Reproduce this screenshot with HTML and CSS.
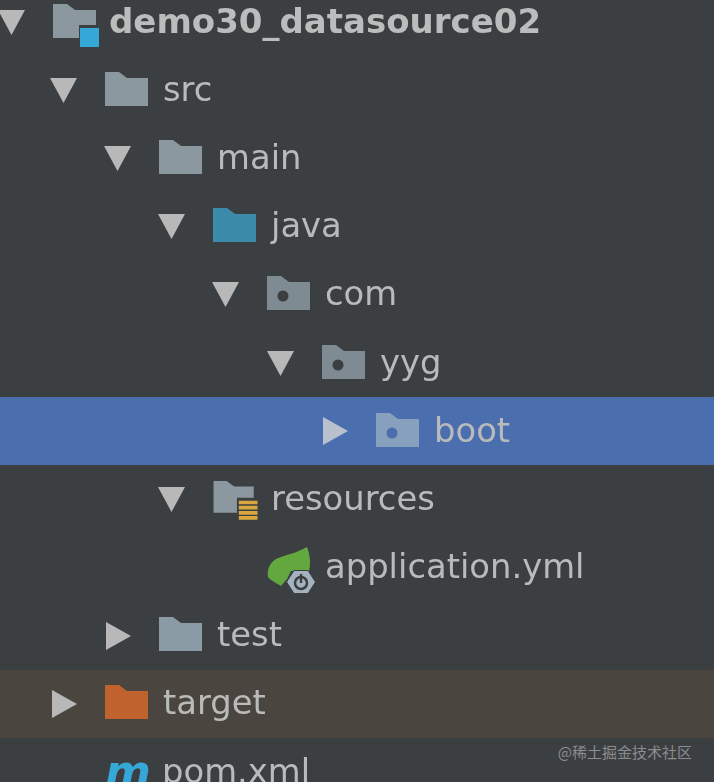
FILE: index.html
```html
<!DOCTYPE html>
<html lang="zh-CN">
<head>
  <meta charset="UTF-8">
  <meta name="viewport" content="width=device-width, initial-scale=1.0">
  <title>demo30_datasource02</title>
  <link rel="stylesheet" href="styles.css">
</head>
<body>

<div class="tree">
  <div class="row lv0">
    <svg class="arrow" viewBox="0 0 27 25"><path d="M0 0H27L13.5 25Z"/></svg>
    <svg class="icon" viewBox="0 0 46 43"><path class="folder" d="M0 0H14L22 6H43V21H26V34H0Z"/><rect class="module-mark" x="27" y="24" width="19" height="19"/></svg>
    <span class="name bold">demo30_datasource02</span>
  </div>
  <div class="row lv1">
    <svg class="arrow" viewBox="0 0 27 25"><path d="M0 0H27L13.5 25Z"/></svg>
    <svg class="icon" viewBox="0 0 46 43"><path class="folder" d="M0 0H14L22 6H43V34H0Z"/></svg>
    <span class="name">src</span>
  </div>
  <div class="row lv2">
    <svg class="arrow" viewBox="0 0 27 25"><path d="M0 0H27L13.5 25Z"/></svg>
    <svg class="icon" viewBox="0 0 46 43"><path class="folder" d="M0 0H14L22 6H43V34H0Z"/></svg>
    <span class="name">main</span>
  </div>
  <div class="row lv3">
    <svg class="arrow" viewBox="0 0 27 25"><path d="M0 0H27L13.5 25Z"/></svg>
    <svg class="icon" viewBox="0 0 46 43"><path class="folder-java" d="M0 0H14L22 6H43V34H0Z"/></svg>
    <span class="name">java</span>
  </div>
  <div class="row lv4">
    <svg class="arrow" viewBox="0 0 27 25"><path d="M0 0H27L13.5 25Z"/></svg>
    <svg class="icon" viewBox="0 0 46 43"><path class="folder-pkg" d="M0 0H14L22 6H43V34H0Z"/><circle class="pkg-dot" cx="16" cy="20" r="5.5"/></svg>
    <span class="name">com</span>
  </div>
  <div class="row lv5">
    <svg class="arrow" viewBox="0 0 27 25"><path d="M0 0H27L13.5 25Z"/></svg>
    <svg class="icon" viewBox="0 0 46 43"><path class="folder-pkg" d="M0 0H14L22 6H43V34H0Z"/><circle class="pkg-dot" cx="16" cy="20" r="5.5"/></svg>
    <span class="name">yyg</span>
  </div>
  <div class="row lv6 selected">
    <svg class="arrow side" viewBox="0 0 25 28"><path d="M0 0L25 14L0 28Z"/></svg>
    <svg class="icon" viewBox="0 0 46 43"><path class="folder-sel" d="M0 0H14L22 6H43V34H0Z"/><circle class="pkg-dot-sel" cx="16" cy="20" r="5.5"/></svg>
    <span class="name">boot</span>
  </div>
  <div class="row lv3">
    <svg class="arrow" viewBox="0 0 27 25"><path d="M0 0H27L13.5 25Z"/></svg>
    <svg class="icon" viewBox="0 0 48 46"><path class="folder" d="M0 0H14L22 6H43V18H25V34H0Z"/><path class="res-lines" d="M27 21H47V25H27ZM27 26.500H47V30.500H27ZM27 32H47V36H27ZM27 37.500H47V41.500H27Z"/></svg>
    <span class="name">resources</span>
  </div>
  <div class="row lv4 leaf">
    <svg class="icon spring" viewBox="0 0 48 46">
      <path class="leaf-shape" d="M40 0C30 6 18 8 9 12C2 16 0 24 1 30C4 34 10 36 14 39L20 32L24 24L42 24C44 16 43 8 40 0Z"/>
      <path class="hex" d="M27 23.500H41L48.500 35L41 46.500H27L19.500 35Z"/>
      <circle class="power" cx="34" cy="36" r="6"/>
      <path class="power-bar" d="M34 27V36"/>
    </svg>
    <span class="name">application.yml</span>
  </div>
  <div class="row lv2">
    <svg class="arrow side" viewBox="0 0 25 28"><path d="M0 0L25 14L0 28Z"/></svg>
    <svg class="icon" viewBox="0 0 46 43"><path class="folder-test" d="M0 0H14L22 6H43V34H0Z"/></svg>
    <span class="name">test</span>
  </div>
  <div class="row lv1 excluded">
    <svg class="arrow side" viewBox="0 0 25 28"><path d="M0 0L25 14L0 28Z"/></svg>
    <svg class="icon" viewBox="0 0 46 43"><path class="folder-target" d="M0 0H14L22 6H43V34H0Z"/></svg>
    <span class="name">target</span>
  </div>
  <div class="row lv1 leaf">
    <span class="maven">m</span>
    <span class="name">pom.xml</span>
  </div>
</div>

<div class="watermark">@稀土掘金技术社区</div>

</body>
</html>
```

FILE: styles.css
```css
html, body {
    height: 100%;
    margin: 0;
    overflow: hidden;
}

body {
    background-color: #3c3f41;
    font-family: "DejaVu Sans", sans-serif;
    color: #b9bbbb;
    position: relative;
}

.tree {
    margin-top: -12px;
    margin-left: -2px;
    filter: blur(0.5px);
}

.row {
    height: 68.2px;
    display: flex;
    align-items: center;
    white-space: nowrap;
}

.lv0 { padding-left: 0; }
.lv1 { padding-left: 52px; }
.lv2 { padding-left: 106px; }
.lv3 { padding-left: 160px; }
.lv4 { padding-left: 214px; }
.lv5 { padding-left: 269px; }
.lv6 { padding-left: 323px; }

.leaf {
    margin-left: 55px;
}

.selected {
    background-color: #4b6eaf;
}

.excluded {
    background-color: #4a463f;
}

.arrow {
    width: 27px;
    height: 25px;
    margin-right: 28px;
    fill: #b8b8b8;
    flex: none;
}

.arrow.side {
    width: 25px;
    height: 28px;
    margin-left: 2px;
    margin-right: 28px;
}

.selected .arrow {
    fill: #b9c1cf;
}

.icon {
    width: 46px;
    height: 43px;
    margin-top: 6px;
    flex: none;
    overflow: visible;
}

.folder { fill: #8b989f; }
.folder-java { fill: #3c8bab; }
.folder-pkg { fill: #7f8b93; }
.folder-sel { fill: #87a0bd; }
.folder-test { fill: #8a9ba6; }
.folder-target { fill: #c0622e; }
.pkg-dot { fill: #3c3f41; }
.pkg-dot-sel { fill: #4b6eaf; }
.module-mark { fill: #36a8d8; }
.res-lines { fill: #d8a83f; }

.spring {
    width: 48px;
    height: 46px;
    margin-top: 4px;
}

.leaf-shape { fill: #62a83f; }
.hex { fill: #a3b2bc; stroke: #3c3f41; stroke-width: 1; }
.power { fill: none; stroke: #3c3f41; stroke-width: 2.5; }
.power-bar { fill: none; stroke: #3c3f41; stroke-width: 2.5; }

.name {
    font-size: 33.8px;
    margin-left: 12px;
    margin-bottom: 2px;
}

.bold {
    font-size: 34px;
    font-weight: bold;
    margin-left: 10px;
    color: #bbbdbd;
}

.leaf .name {
    margin-left: 10px;
}

.maven {
    width: 47px;
    font-size: 44px;
    font-weight: bold;
    font-style: italic;
    color: #36a8d8;
    line-height: 1;
    flex: none;
}

.watermark {
    position: absolute;
    right: 22px;
    top: 741px;
    font-family: "Noto Sans CJK SC", sans-serif;
    font-size: 15px;
    color: #8b8d8e;
}
```
